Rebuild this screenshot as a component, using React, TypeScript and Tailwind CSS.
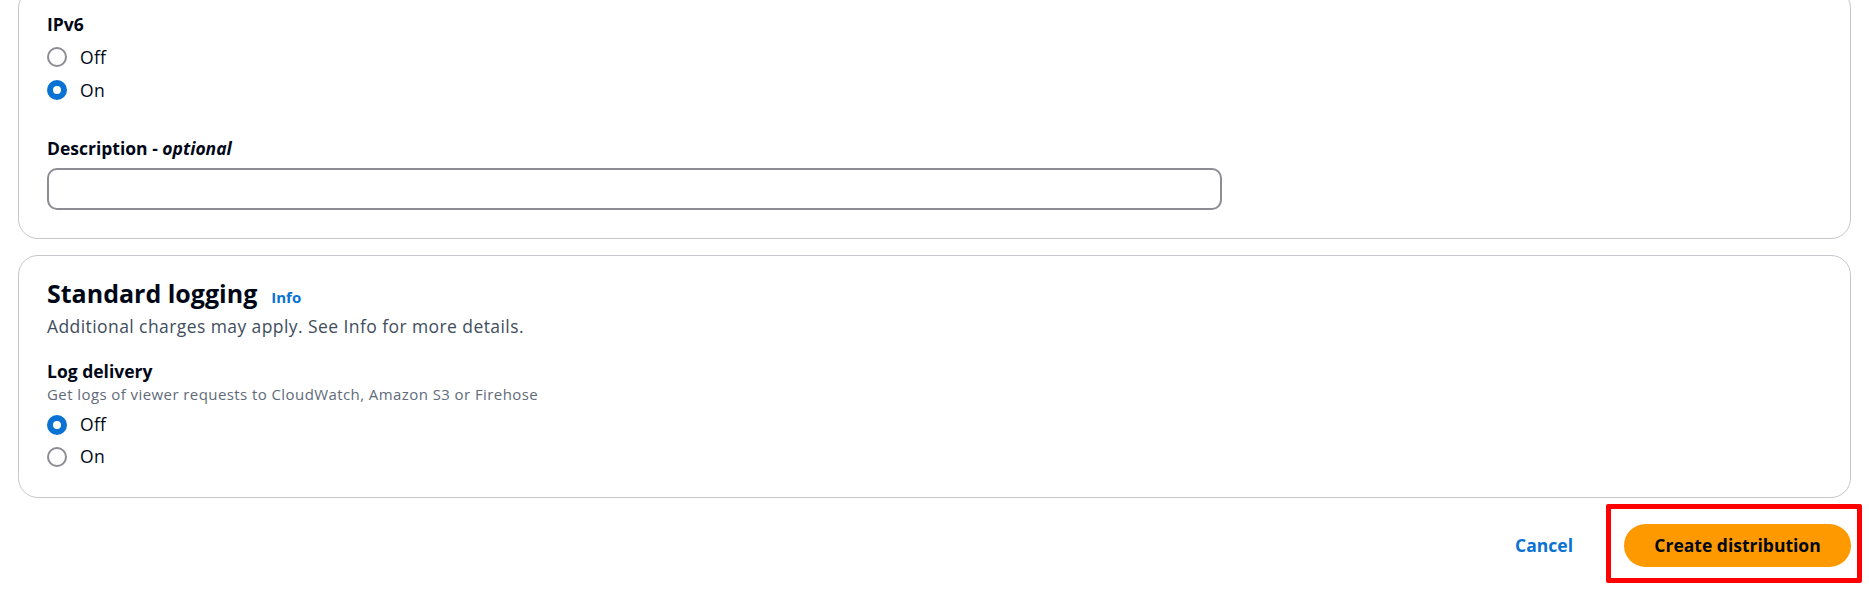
import React from 'react';

type Option = { label: string; checked: boolean };

function Radio({ label, checked }: Option) {
  return (
    <label className="flex h-[32px] items-center gap-[13px] cursor-pointer">
      {checked ? (
        <span className="block h-[20px] w-[20px] rounded-full border-[6px] border-[#0972d3] bg-white" />
      ) : (
        <span className="block h-[20px] w-[20px] rounded-full border-2 border-[#8c8c94] bg-white" />
      )}
      <span className="text-[17.5px] leading-[25px] tracking-[0.3px] text-[#000716]">{label}</span>
    </label>
  );
}

export default function App() {
  const ipv6: Option[] = [
    { label: 'Off', checked: false },
    { label: 'On', checked: true },
  ];
  const logDelivery: Option[] = [
    { label: 'Off', checked: true },
    { label: 'On', checked: false },
  ];

  return (
    <div
      className="min-h-screen overflow-hidden bg-white px-[18px]"
      style={{ fontFamily: '"Open Sans", "Noto Sans", sans-serif' }}
    >
      <div className="flex flex-col gap-[16px]">
        {/* IPv6 + description (top of card is scrolled off) */}
        <section className="-mt-[12px] rounded-[20px] border border-[#c6c6cd] bg-white px-[28px] pt-[23px] pb-[28px]">
          <div className="text-[17.5px] font-bold leading-[25px] text-[#000716]">IPv6</div>
          <div className="mt-[4px] flex flex-col gap-[1px]">
            {ipv6.map((o) => (
              <Radio key={o.label} {...o} />
            ))}
          </div>

          <div className="mt-[30px] text-[17.5px] font-bold leading-[25px] text-[#000716]">
            Description - <i>optional</i>
          </div>
          <input
            type="text"
            className="mt-[7px] block h-[42px] w-[1175px] rounded-[10px] border-2 border-[#8c8c94] bg-white px-3 outline-none"
          />
        </section>

        {/* Standard logging */}
        <section className="rounded-[20px] border border-[#c6c6cd] bg-white px-[28px] pt-[22px] pb-[24px]">
          <div className="flex items-baseline gap-[14px]">
            <h2 className="text-[25px] font-bold leading-[30px] text-[#000716]">Standard logging</h2>
            <a className="text-[15px] font-bold text-[#0972d3] cursor-pointer">Info</a>
          </div>
          <p className="mt-[5px] text-[17.5px] leading-[25px] tracking-[0.42px] text-[#414d5c]">
            Additional charges may apply. See Info for more details.
          </p>

          <div className="mt-[20px] text-[17.5px] font-bold leading-[25px] text-[#000716]">Log delivery</div>
          <div className="text-[15px] leading-[20px] tracking-[0.42px] text-[#5f6b7a]">
            Get logs of viewer requests to CloudWatch, Amazon S3 or Firehose
          </div>
          <div className="mt-[5px] flex flex-col">
            {logDelivery.map((o) => (
              <Radio key={o.label} {...o} />
            ))}
          </div>
        </section>
      </div>

      {/* Actions */}
      <div className="mt-[26px] flex items-center justify-end gap-[51px]">
        <button className="text-[17.5px] font-bold leading-[25px] text-[#0972d3] cursor-pointer">Cancel</button>
        <div className="relative">
          <button className="h-[43px] w-[227px] rounded-full bg-[#ff9900] text-[17.5px] font-bold text-[#000716] cursor-pointer">
            Create distribution
          </button>
          <div className="pointer-events-none absolute -left-[18px] -right-[11px] -top-[20px] -bottom-[16px] rounded-[2px] border-[5px] border-[#ff0000]" />
        </div>
      </div>
    </div>
  );
}
